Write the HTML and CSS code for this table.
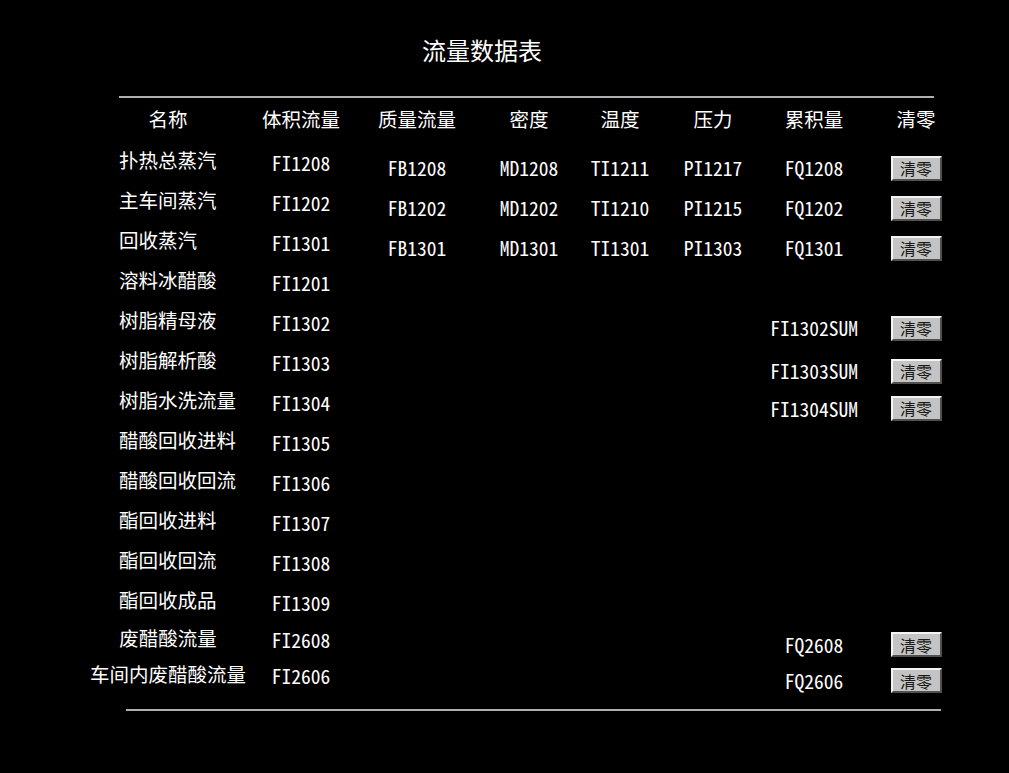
FILE: index.html
```html
<!DOCTYPE html>
<html lang="zh">
<head>
<meta charset="utf-8">
<title>流量数据表</title>
<link rel="stylesheet" href="styles.css">
</head>
<body>
<div class="page">
  <div class="title">流量数据表</div>
  <div class="rule top"></div>
  <div class="table">
    <div class="hd c1">名称</div>
    <div class="hd c2">体积流量</div>
    <div class="hd c3">质量流量</div>
    <div class="hd c4">密度</div>
    <div class="hd c5">温度</div>
    <div class="hd c6">压力</div>
    <div class="hd c7">累积量</div>
    <div class="hd c8">清零</div>

    <div class="name c1">扑热总蒸汽</div><div class="code c2">FI1208</div>
    <div class="code r c3">FB1208</div><div class="code r c4">MD1208</div><div class="code r c5">TI1211</div><div class="code r c6">PI1217</div><div class="code r c7">FQ1208</div><div class="r c8"><button class="btn">清零</button></div>

    <div class="name c1">主车间蒸汽</div><div class="code c2">FI1202</div>
    <div class="code r c3">FB1202</div><div class="code r c4">MD1202</div><div class="code r c5">TI1210</div><div class="code r c6">PI1215</div><div class="code r c7">FQ1202</div><div class="r c8"><button class="btn">清零</button></div>

    <div class="name c1">回收蒸汽</div><div class="code c2">FI1301</div>
    <div class="code r c3">FB1301</div><div class="code r c4">MD1301</div><div class="code r c5">TI1301</div><div class="code r c6">PI1303</div><div class="code r c7">FQ1301</div><div class="r c8"><button class="btn">清零</button></div>

    <div class="name c1">溶料冰醋酸</div><div class="code c2">FI1201</div>

    <div class="name c1">树脂精母液</div><div class="code c2">FI1302</div>
    <div class="code r c7">FI1302SUM</div><div class="r c8"><button class="btn">清零</button></div>

    <div class="name c1">树脂解析酸</div><div class="code c2">FI1303</div>
    <div class="code r low c7">FI1303SUM</div><div class="r low c8"><button class="btn">清零</button></div>

    <div class="name c1">树脂水洗流量</div><div class="code c2">FI1304</div>
    <div class="code r mid c7">FI1304SUM</div><div class="r c8"><button class="btn">清零</button></div>

    <div class="name c1">醋酸回收进料</div><div class="code c2">FI1305</div>
    <div class="name c1">醋酸回收回流</div><div class="code c2">FI1306</div>
    <div class="name c1">酯回收进料</div><div class="code c2">FI1307</div>
    <div class="name c1">酯回收回流</div><div class="code c2">FI1308</div>
    <div class="name c1">酯回收成品</div><div class="code c2">FI1309</div>

    <div class="name center c1">废醋酸流量</div><div class="code up c2">FI2608</div>
    <div class="code r up c7">FQ2608</div><div class="r up c8"><button class="btn">清零</button></div>

    <div class="name center c1">车间内废醋酸流量</div><div class="code up c2">FI2606</div>
    <div class="code r up c7">FQ2606</div><div class="r up c8"><button class="btn">清零</button></div>
  </div>
  <div class="rule bottom"></div>
</div>
</body>
</html>
```

FILE: styles.css
```css
html, body {
  margin: 0;
  padding: 0;
  background: #000;
}
body {
  color: #fff;
  font-family: "Noto Sans CJK SC", "Noto Sans", sans-serif;
}
.page {
  width: 1009px;
  height: 773px;
  overflow: hidden;
  padding-top: 35px;
  box-sizing: border-box;
}
.title {
  width: 964px;
  text-align: center;
  font-size: 24px;
  line-height: 30px;
  height: 30px;
}
.rule {
  width: 815px;
  height: 2px;
  background: #b0b0b0;
}
.rule.top {
  margin: 31px 0 0 119px;
}
.rule.bottom {
  margin: 16px 0 0 126px;
}
.table {
  margin-left: 100px;
  display: grid;
  grid-template-columns: 136px 130px 102px 122px 60px 126px 76px 128px;
  grid-template-rows: 43px repeat(12, 40px) 36px 36px;
  align-items: center;
  font-size: 19.5px;
  line-height: 24px;
}
.c1 { grid-column: 1; }
.c2 { grid-column: 2; }
.c3 { grid-column: 3; }
.c4 { grid-column: 4; }
.c5 { grid-column: 5; }
.c6 { grid-column: 6; }
.c7 { grid-column: 7; }
.c8 { grid-column: 8; }
.hd {
  text-align: center;
  white-space: nowrap;
  padding-bottom: 1px;
}
.name {
  padding-left: 19px;
  padding-bottom: 3px;
  white-space: nowrap;
}
.name.center {
  padding-left: 0;
  text-align: center;
  margin: 0 -20px;
}
.code {
  text-align: center;
  white-space: nowrap;
  font-feature-settings: "hwid" 1;
  padding-top: 4px;
}
.code.up {
  padding-top: 1px;
}
.r {
  padding-top: 14px;
  display: flex;
  justify-content: center;
}
.r.low {
  padding-top: 20px;
}
.r.mid {
  padding-top: 16px;
}
.r.up {
  padding-top: 11px;
}
.btn {
  width: 51px;
  height: 25px;
  padding: 0;
  margin: 0;
  background: #c4c4c4;
  border: 2px solid;
  border-color: #f4f4f4 #505050 #505050 #f4f4f4;
  color: #1a1a1a;
  font-family: "Noto Sans CJK SC", sans-serif;
  font-size: 16px;
  line-height: 20px;
  letter-spacing: 0;
}
```
